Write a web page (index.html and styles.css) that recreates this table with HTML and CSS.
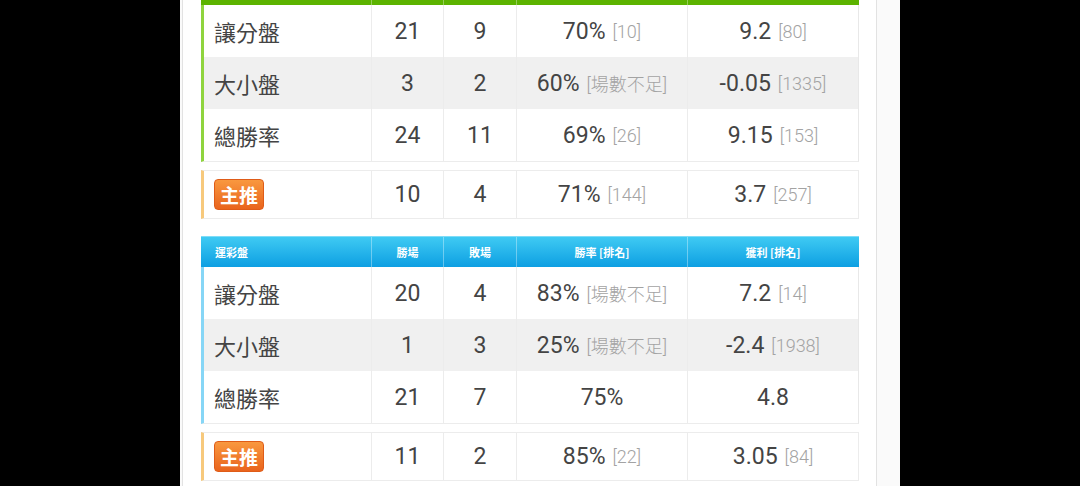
FILE: index.html
```html
<!DOCTYPE html>
<html lang="zh-Hant">
<head>
  <meta charset="UTF-8">
  <meta name="viewport" content="width=device-width, initial-scale=1.0">
  <title>戰績統計</title>
  <link rel="stylesheet" href="styles.css">
</head>

<body>
  <div class="page">
    <div class="panel">

      <div class="stats green first">
        <!-- header scrolled off the top: only its bottom edge shows -->
        <div class="head scrolled">
          <div class="cell title"></div>
          <div class="cell"></div>
          <div class="cell"></div>
          <div class="cell"></div>
          <div class="cell"></div>
        </div>
        <div class="rows">
          <div class="row">
            <div class="cell name">讓分盤</div>
            <div class="cell">21</div>
            <div class="cell">9</div>
            <div class="cell">70%<span class="rank">[10]</span></div>
            <div class="cell">9.2<span class="rank">[80]</span></div>
          </div>
          <div class="row alt">
            <div class="cell name">大小盤</div>
            <div class="cell">3</div>
            <div class="cell">2</div>
            <div class="cell">60%<span class="rank">[場數不足]</span></div>
            <div class="cell">-0.05<span class="rank">[1335]</span></div>
          </div>
          <div class="row">
            <div class="cell name">總勝率</div>
            <div class="cell">24</div>
            <div class="cell">11</div>
            <div class="cell">69%<span class="rank">[26]</span></div>
            <div class="cell">9.15<span class="rank">[153]</span></div>
          </div>
        </div>
      </div>

      <div class="pick">
        <div class="cell name"><span class="badge">主推</span></div>
        <div class="cell">10</div>
        <div class="cell">4</div>
        <div class="cell">71%<span class="rank">[144]</span></div>
        <div class="cell">3.7<span class="rank">[257]</span></div>
      </div>

      <div class="stats blue">
        <div class="head">
          <div class="cell title">運彩盤</div>
          <div class="cell">勝場</div>
          <div class="cell">敗場</div>
          <div class="cell">勝率 [排名]</div>
          <div class="cell">獲利 [排名]</div>
        </div>
        <div class="rows">
          <div class="row">
            <div class="cell name">讓分盤</div>
            <div class="cell">20</div>
            <div class="cell">4</div>
            <div class="cell">83%<span class="rank">[場數不足]</span></div>
            <div class="cell">7.2<span class="rank">[14]</span></div>
          </div>
          <div class="row alt">
            <div class="cell name">大小盤</div>
            <div class="cell">1</div>
            <div class="cell">3</div>
            <div class="cell">25%<span class="rank">[場數不足]</span></div>
            <div class="cell">-2.4<span class="rank">[1938]</span></div>
          </div>
          <div class="row">
            <div class="cell name">總勝率</div>
            <div class="cell">21</div>
            <div class="cell">7</div>
            <div class="cell">75%</div>
            <div class="cell">4.8</div>
          </div>
        </div>
      </div>

      <div class="pick">
        <div class="cell name"><span class="badge">主推</span></div>
        <div class="cell">11</div>
        <div class="cell">2</div>
        <div class="cell">85%<span class="rank">[22]</span></div>
        <div class="cell">3.05<span class="rank">[84]</span></div>
      </div>

    </div>
  </div>
</body>
</html>
```

FILE: styles.css
```css
html, body {
  margin: 0;
  height: 100%;
  overflow: hidden;
}

body {
  background: #000;
  display: flex;
  justify-content: center;
  align-items: flex-start;
  font-family: Roboto, "Noto Sans CJK TC", sans-serif;
  color: #444;
}

.page {
  width: 720px;
  min-height: 100vh;
  background: #fafafa;
  padding-left: 2px;
  padding-right: 24px;
  box-sizing: border-box;
  display: flex;
}

.panel {
  flex: 1;
  background: #fff;
  border-left: 1px solid #e2e2e2;
  border-right: 1px solid #e2e2e2;
  padding: 0 17px 20px 18px;
}

.stats {
  margin-top: 17px;
}

.stats.first {
  margin-top: 0;
}

/* header row */
.head {
  display: grid;
  grid-template-columns: 170px 72px 73px 171px 171px;
  height: 31px;
  color: #fff;
  font-size: 11px;
  font-weight: bold;
  font-family: "Noto Sans CJK TC", sans-serif;
}

.head.scrolled {
  height: 5px;
}

.green .head {
  background: #5cb300;
}

.blue .head {
  background: linear-gradient(#3fcaf3, #0d9fe2);
  border-top: 1px solid #7fdcf7;
  box-sizing: border-box;
}

.head .cell {
  display: flex;
  align-items: center;
  justify-content: center;
  border-left: 1px solid rgba(255, 255, 255, 0.35);
}

.head .cell.title {
  justify-content: flex-start;
  padding-left: 14px;
  border-left: none;
}

/* body rows */
.rows {
  border-left: 3px solid #8fd43e;
  border-right: 1px solid #e8e8e8;
  border-bottom: 1px solid #ececec;
}

.blue .rows {
  border-left-color: #86d6f6;
}

.row, .pick {
  display: grid;
  grid-template-columns: 167px 72px 73px 171px 171px;
  height: 52px;
  font-size: 23px;
}

.row.alt {
  background: #f0f0f0;
}

.row .cell, .pick .cell {
  display: flex;
  align-items: center;
  justify-content: center;
  border-left: 1px solid #ececec;
}

.row .cell.name, .pick .cell.name {
  justify-content: flex-start;
  padding-left: 10px;
  border-left: none;
  font-family: "Noto Sans CJK TC", sans-serif;
  font-size: 22px;
  color: #444;
}

.rank {
  font-size: 18px;
  font-weight: 300;
  color: #a3a3a3;
  margin-left: 7px;
}

/* 主推 row */
.pick {
  margin-top: 8px;
  height: 47px;
  border: 1px solid #ececec;
  border-left: 3px solid #f7c97c;
}

.badge {
  display: inline-block;
  width: 50px;
  height: 31px;
  line-height: 30px;
  text-align: center;
  box-sizing: border-box;
  border-radius: 4px;
  background: linear-gradient(#f9983f, #e9641d);
  border: 1px solid #df5c18;
  color: #fff;
  font-size: 19px;
  font-weight: bold;
}
```
